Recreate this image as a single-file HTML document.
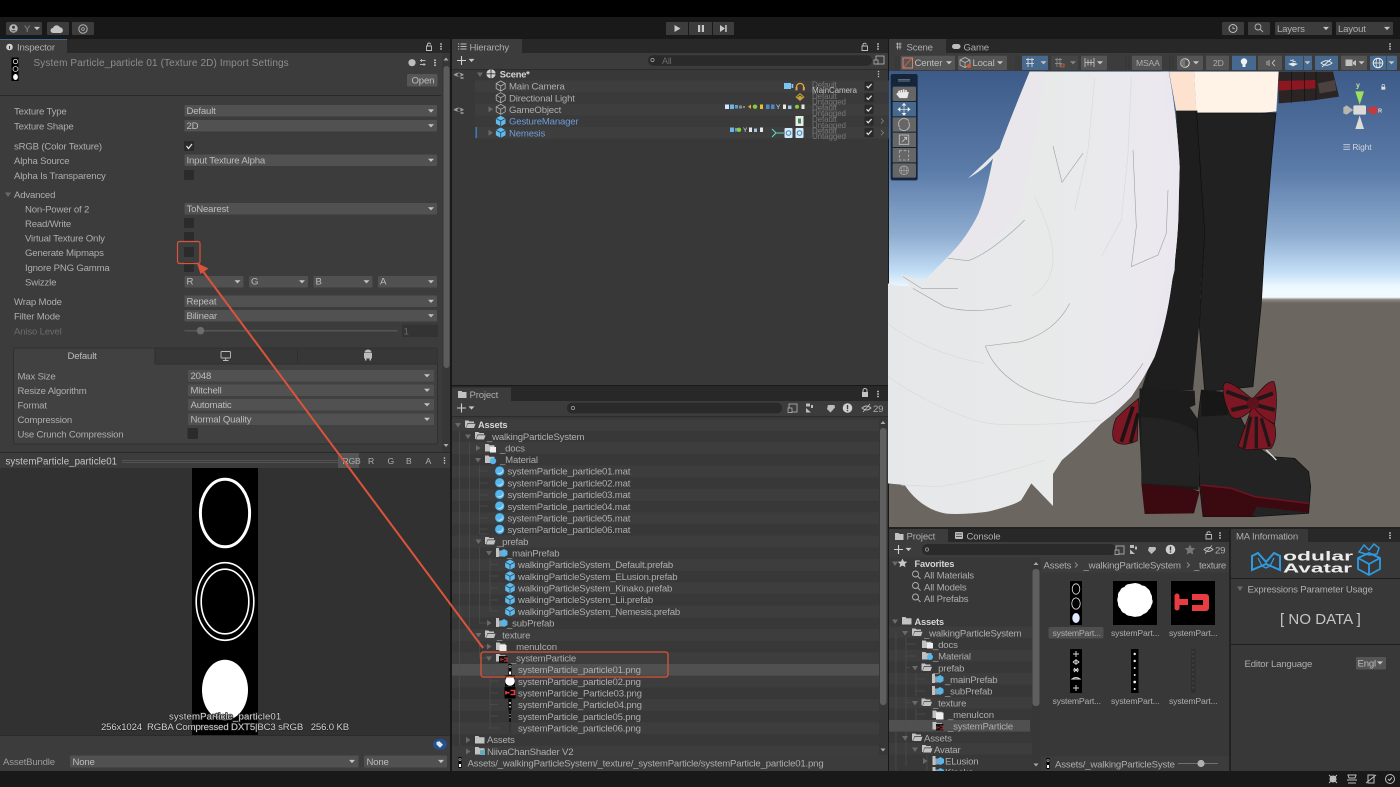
<!DOCTYPE html>
<html><head><meta charset="utf-8"><title>Unity Editor</title>
<style>
html,body{margin:0;padding:0;background:#000;width:1400px;height:787px;overflow:hidden}
svg{display:block;filter:blur(.3px)}
text{font-family:"Liberation Sans",sans-serif;font-size:9.6px;fill:#aeaeae;letter-spacing:-.18px;white-space:pre}
.d{fill:#bdbdbd}
.dim{fill:#6b6b6b}
.b{fill:#6f9bd6}
.s{font-size:8px;fill:#777;letter-spacing:-.1px}
.w{fill:#d6d6d6}
.bar{fill:#515151}
.box{fill:#2b2b2b}
.ic{fill:#c4c4c4}
</style></head><body>
<svg width="1400" height="787" viewBox="0 0 1400 787" xmlns="http://www.w3.org/2000/svg">
<defs>
<path id="da" d="M-3-1.6h6L0 1.6z" fill="#c4c4c4"/>
<path id="ta" d="M-3-2h6L0 2.5z" fill="#6a6a6a"/>
<path id="ra" d="M-2-3 2.5 0-2 3z" fill="#6a6a6a"/>
<path id="fo" d="M0 1h3.5l1 1H9v1.5H2.5L1 8H0zM2.8 4.2H10.5L9 8.5H1.2z" fill="#c2c2c2"/>
<path id="fc" d="M0 1h3.5l1 1.2H9.5v6.3H0z" fill="#c2c2c2"/>
<g id="fcube"><path d="M0 0h3v9H0z" fill="#c2c2c2"/><path d="M3 2.5h3.5v6H3z" fill="#9a9a9a"/><path d="M8-1 11.5 1V5L8 7 4.5 5V1z" transform="translate(0 2)" fill="#5ab4e6"/></g>
<g id="cb"><path d="M0-5.2 4.8-2.6V2.6L0 5.2-4.8 2.6V-2.6z" fill="#5fbbeb"/><path d="M-4.8-2.6 0 0 4.8-2.6M0 0V5.2" stroke="#2b4252" fill="none" stroke-width=".8"/></g>
<g id="cg"><path d="M0-5 4.5-2.5V2.5L0 5-4.5 2.5V-2.5zM-4.5-2.5 0 0 4.5-2.5M0 0V5" stroke="#b4b4b4" fill="none" stroke-width=".8"/></g>
<g id="mat"><circle r="4.8" fill="#58b7ea"/><path d="M-3 1.5A3.6 3.6 0 0 0 3.2-2 4 4 0 0 1-3 1.5z" fill="#dff1fb"/><circle r="4.8" fill="none" stroke="#2a4b60" stroke-width=".5"/></g>
<g id="chk"><rect x="-4.6" y="-4.6" width="9.2" height="9.2" rx="1" fill="#2a2a2a"/><path d="M-2.4 0-.8 1.8 2.6-2" stroke="#e4e4e4" stroke-width="1.2" fill="none"/></g>
<g id="mag"><circle cx="-1" cy="-1" r="3" fill="none" stroke="#b0b0b0" stroke-width=".9"/><path d="M1.2 1.2 4 4" stroke="#b0b0b0" stroke-width="1"/></g>
<pattern id="st" width="10" height="23.34" patternUnits="userSpaceOnUse" patternTransform="translate(0 419)"><rect width="10" height="11.67" fill="#3d3d3d"/></pattern>
<pattern id="st2" width="10" height="23.34" patternUnits="userSpaceOnUse" patternTransform="translate(0 80.5)"><rect width="10" height="11.67" fill="#3e3e3e"/></pattern>
<linearGradient id="sky" x1="0" y1="71" x2="0" y2="303" gradientUnits="userSpaceOnUse">
<stop offset="0" stop-color="#3d5b88"/><stop offset=".42" stop-color="#5a7aa8"/><stop offset=".71" stop-color="#8fadd0"/><stop offset=".86" stop-color="#c0dcf5"/><stop offset=".93" stop-color="#ecf8ff"/><stop offset=".975" stop-color="#f4fbff"/><stop offset=".985" stop-color="#8e8a85"/><stop offset="1" stop-color="#6c6660"/></linearGradient>
<linearGradient id="hr" x1="0" y1="0" x2="1" y2="0"><stop offset="0" stop-color="#e6e7e9"/><stop offset=".55" stop-color="#e8eaea"/><stop offset="1" stop-color="#ece8f0"/></linearGradient>
</defs>

<!-- base -->
<rect width="1400" height="787" fill="#191919"/>
<rect width="1400" height="17" fill="#000"/>
<!-- top toolbar -->
<g fill="#3c3c3c">
<rect x="6" y="22" width="36" height="13" rx="1"/><rect x="47" y="22" width="22" height="13" rx="1"/><rect x="72" y="22" width="22" height="13" rx="1"/>
<rect x="666" y="22" width="22" height="13"/><rect x="689" y="22" width="23" height="13"/><rect x="713" y="22" width="21" height="13"/>
<rect x="1222" y="22" width="22" height="13" rx="1"/><rect x="1248" y="22" width="22" height="13" rx="1"/><rect x="1275" y="22" width="57" height="13" rx="1"/><rect x="1336" y="22" width="57" height="13" rx="1"/>
</g>
<circle cx="13.5" cy="28.5" r="4.2" fill="#b8b8b8"/><circle cx="13.5" cy="27.3" r="1.5" fill="#3c3c3c"/><path d="M10.8 31.3a3 2 0 0 1 5.4 0" fill="#3c3c3c"/>
<text x="24" y="32" style="fill:#8d8d8d">Y</text><use href="#da" x="37" y="28.5"/>
<path d="M53 33a2.5 2.5 0 0 1 0-5 3.8 3.8 0 0 1 7-.6 2.9 2.9 0 0 1 1 5.6z" fill="#c4c4c4"/>
<circle cx="83" cy="29" r="4.2" fill="none" stroke="#b4b4b4" stroke-width="1"/><circle cx="83" cy="29" r="1.4" fill="none" stroke="#b4b4b4" stroke-width=".8"/>
<path d="M674.5 25v7l6-3.5z" fill="#c8c8c8"/><path d="M698 25h2.2v7H698zM701.8 25h2.2v7h-2.2z" fill="#c8c8c8"/><path d="M720 25v7l5-3.5zM725.2 25h1.5v7h-1.5z" fill="#c8c8c8"/>
<circle cx="1233" cy="28.5" r="4" fill="none" stroke="#c0c0c0"/><path d="M1233 26.5v2.2h1.8" stroke="#c0c0c0" fill="none" stroke-width=".8"/>
<use href="#mag" x="1259" y="28"/>
<text x="1277" y="32">Layers</text><use href="#da" x="1326" y="28.5"/>
<text x="1338" y="32">Layout</text><use href="#da" x="1387" y="28.5"/>

<!-- INSPECTOR -->
<rect x="0" y="39" width="450" height="14" fill="#282828"/>
<rect x="0" y="39" width="67" height="14" fill="#3c3c3c"/><rect x="0" y="39" width="67" height="1" fill="#3a6a93"/>
<circle cx="9.5" cy="47" r="3.3" fill="#d0d0d0"/><rect x="9" y="46" width="1" height="3" fill="#333"/>
<text x="17" y="50.5">Inspector</text>
<path d="M426.5 46h5v4.5h-5zM427.5 46v-1.5a1.5 1.5 0 0 1 3 0" fill="none" stroke="#c0c0c0" stroke-width=".9"/>
<circle cx="441" cy="44" r=".9" fill="#ccc"/><circle cx="441" cy="46.5" r=".9" fill="#ccc"/><circle cx="441" cy="49" r=".9" fill="#ccc"/>
<rect x="0" y="53" width="450" height="418" fill="#3c3c3c"/>
<rect x="0" y="95" width="441" height="1" fill="#2a2a2a"/>
<rect x="11.5" y="57.5" width="7" height="23.5" fill="#000"/><circle cx="15.5" cy="61.5" r="2.2" fill="none" stroke="#ddd" stroke-width=".8"/><circle cx="15.5" cy="69" r="2.5" fill="none" stroke="#ddd" stroke-width=".8"/><ellipse cx="15.5" cy="77" rx="2.4" ry="3" fill="#fff"/>
<text x="33.5" y="66" textLength="255" style="fill:#8e8e8e;font-size:10px">System Particle_particle 01 (Texture 2D) Import Settings</text>
<circle cx="412" cy="62.7" r="3.6" fill="#bdbdbd"/><path d="M420 60.5h5.5M420 64.5h5.5M421.5 59v3M424 63v3" stroke="#bbb" stroke-width=".9"/>
<circle cx="435" cy="60.2" r=".9" fill="#ccc"/><circle cx="435" cy="62.7" r=".9" fill="#ccc"/><circle cx="435" cy="65.2" r=".9" fill="#ccc"/>
<rect x="407" y="74" width="30.5" height="12.5" rx="1.5" fill="#565656"/><text x="411.5" y="83.5" class="d">Open</text>
<!-- inspector scrollbar -->
<rect x="442" y="53" width="8" height="399" fill="#373737"/><rect x="443.5" y="66" width="6" height="302" rx="3" fill="#5c5c5c"/><path d="M443.5 60.5h5l-2.5-3z" fill="#aaa"/><path d="M443.5 444h5l-2.5 3z" fill="#aaa"/>

<rect x="0" y="735" width="450" height="36" fill="#3c3c3c"/><rect x="0" y="735" width="450" height="1" fill="#2b2b2b"/>
<rect x="13.5" y="348" width="424" height="96" rx="2" fill="#414141" stroke="#2f2f2f"/>
<rect x="155" y="348.5" width="282.5" height="15" fill="#373737"/>
<path d="M155 348v16M297.5 348v16M155 364h283" stroke="#2f2f2f"/>

<g>
<text x="14" y="114.5">Texture Type</text>
<text x="14" y="129.5">Texture Shape</text>
<text x="14" y="149.5">sRGB (Color Texture)</text>
<text x="14" y="164">Alpha Source</text>
<text x="14" y="179">Alpha Is Transparency</text>
<use href="#ta" x="8" y="194.5"/>
<text x="14" y="198">Advanced</text>
<text x="25" y="212.5">Non-Power of 2</text>
<text x="25" y="227">Read/Write</text>
<text x="25" y="241.5">Virtual Texture Only</text>
<text x="25" y="256">Generate Mipmaps</text>
<text x="25" y="271">Ignore PNG Gamma</text>
<text x="25" y="285.5">Swizzle</text>
<text x="14" y="305">Wrap Mode</text>
<text x="14" y="319.5">Filter Mode</text>
<text x="14" y="334.5" class="dim">Aniso Level</text>
</g>
<g class="bar">
<rect x="184.5" y="105" width="252.5" height="11.5" rx="1"/><rect x="184.5" y="120" width="252.5" height="11.5" rx="1"/>
<rect x="184.5" y="154.5" width="252.5" height="11.5" rx="1"/><rect x="184.5" y="203" width="252.5" height="11.5" rx="1"/>
<rect x="184.5" y="276" width="59" height="11.5" rx="1"/><rect x="249" y="276" width="59" height="11.5" rx="1"/><rect x="313.5" y="276" width="59" height="11.5" rx="1"/><rect x="378" y="276" width="59" height="11.5" rx="1"/>
<rect x="184.5" y="295.5" width="252.5" height="11.5" rx="1"/><rect x="184.5" y="310" width="252.5" height="11.5" rx="1"/>
<rect x="188" y="370" width="246" height="11.5" rx="1"/><rect x="188" y="384.5" width="246" height="11.5" rx="1"/><rect x="188" y="399" width="246" height="11.5" rx="1"/><rect x="188" y="413.5" width="246" height="11.5" rx="1"/>
<rect x="70" y="755.5" width="288.5" height="12" rx="1"/><rect x="364" y="755.5" width="83" height="12" rx="1"/>
</g>
<g>
<text x="186.5" y="114" class="d">Default</text><text x="186.5" y="129" class="d">2D</text><text x="186.5" y="163.5" class="d">Input Texture Alpha</text><text x="186.5" y="212" class="d">ToNearest</text>
<text x="186.5" y="284.5" class="d">R</text><text x="251" y="284.5" class="d">G</text><text x="315.5" y="284.5" class="d">B</text><text x="380" y="284.5" class="d">A</text>
<text x="186.5" y="304.5" class="d">Repeat</text><text x="186.5" y="319" class="d">Bilinear</text>
<text x="190.5" y="379" class="d">2048</text><text x="190.5" y="393.5" class="d">Mitchell</text><text x="190.5" y="408" class="d">Automatic</text><text x="190.5" y="422.5" class="d">Normal Quality</text>
<text x="72.5" y="765" class="d">None</text><text x="366.5" y="765" class="d">None</text>
</g>
<use href="#da" x="431" y="111"/><use href="#da" x="431" y="125.8"/><use href="#da" x="431" y="160.3"/><use href="#da" x="431" y="208.8"/>
<use href="#da" x="237.5" y="281.8"/><use href="#da" x="302" y="281.8"/><use href="#da" x="366.5" y="281.8"/><use href="#da" x="431" y="281.8"/>
<use href="#da" x="431" y="301.3"/><use href="#da" x="431" y="315.8"/>
<use href="#da" x="427" y="375.8"/><use href="#da" x="427" y="390.3"/><use href="#da" x="427" y="404.8"/><use href="#da" x="427" y="419.3"/>
<use href="#da" x="352" y="761.5"/><use href="#da" x="441" y="761.5"/>
<g class="box">
<rect x="184" y="141" width="10" height="10" rx="1"/><rect x="184" y="170" width="10" height="10" rx="1"/><rect x="184" y="218" width="10" height="10" rx="1"/><rect x="184" y="232" width="10" height="10" rx="1"/><rect x="184" y="247" width="10" height="10" rx="1"/><rect x="184" y="262" width="10" height="10" rx="1"/><rect x="187.5" y="428" width="10.5" height="11" rx="1.5"/>
</g>
<path d="M186.5 146 188.5 148.5 192 144" stroke="#e6e6e6" stroke-width="1.2" fill="none"/>
<rect x="184.5" y="330" width="213" height="1.5" fill="#555"/><circle cx="200.5" cy="330.7" r="3.8" fill="#6c6c6c"/>
<rect x="402" y="324.5" width="36" height="12.5" rx="1" fill="#333"/><text x="403.5" y="334.5" class="dim">1</text>
<text x="67.5" y="359" class="d">Default</text>
<rect x="221" y="351.5" width="9.5" height="6.5" rx="1" fill="none" stroke="#bdbdbd" stroke-width=".9"/><path d="M225.7 358v2M223 360.5h5.5" stroke="#bdbdbd" stroke-width=".9"/>
<path d="M364 353h8v5.5h-1v2h-1.5v-2h-3v2H365v-2h-1zM364.5 352.5a3.5 3 0 0 1 7 0z" fill="#bcbcbc"/>
<text x="17.5" y="379.5">Max Size</text><text x="17.5" y="394">Resize Algorithm</text><text x="17.5" y="408.5">Format</text><text x="17.5" y="423">Compression</text><text x="17.5" y="437.5">Use Crunch Compression</text>
<!-- preview header -->
<rect x="0" y="452" width="450" height="1" fill="#2a2a2a"/>
<rect x="0" y="453" width="450" height="15" fill="#3c3c3c"/>
<text x="5.5" y="464.5" style="font-size:9.7px;fill:#c6c6c6;letter-spacing:.05px">systemParticle_particle01</text>
<path d="M122 460.5h216M122 462.5h216" stroke="#5a5a5a" stroke-width=".8"/>
<rect x="338" y="453" width="21" height="15" fill="#555"/>
<text x="342.5" y="464" style="font-size:8.6px">RGB</text><text x="368" y="464" style="font-size:8.6px">R</text><text x="387.5" y="464" style="font-size:8.6px">G</text><text x="406" y="464" style="font-size:8.6px">B</text><text x="425.5" y="464" style="font-size:8.6px">A</text>
<circle cx="444.5" cy="458" r=".8" fill="#ccc"/><circle cx="444.5" cy="460.5" r=".8" fill="#ccc"/><circle cx="444.5" cy="463" r=".8" fill="#ccc"/>
<!-- preview -->
<rect x="0" y="468" width="450" height="267" fill="#313131"/>
<rect x="192" y="468" width="66" height="267" fill="#000"/>
<ellipse cx="225" cy="513" rx="24.6" ry="33.8" fill="none" stroke="#fff" stroke-width="3"/>
<ellipse cx="225" cy="601.5" rx="28.8" ry="38.8" fill="none" stroke="#fff" stroke-width="1.6"/>
<ellipse cx="225" cy="601.5" rx="23.8" ry="32.3" fill="none" stroke="#fff" stroke-width="1.6"/>
<ellipse cx="225" cy="690" rx="23" ry="30.3" fill="#fff"/>
<text x="225" y="719.5" text-anchor="middle" textLength="112" style="fill:#d2d2d2;paint-order:stroke;stroke:#222;stroke-width:1.5px">systemParticle_particle01</text>
<text x="225" y="730" text-anchor="middle" textLength="248" style="fill:#d2d2d2;paint-order:stroke;stroke:#222;stroke-width:1.2px">256x1024  RGBA Compressed DXT5|BC3 sRGB   256.0 KB</text>
<ellipse cx="440" cy="744.3" rx="7" ry="5.5" fill="#24508c"/><path d="M436.5 742v2.5l3.5 3.2 3-3-3.5-3.4z" fill="#e0e6ee"/>
<text x="3" y="765" style="fill:#9c9c9c">AssetBundle</text>

<!-- HIERARCHY -->
<rect x="452" y="39" width="436" height="346" fill="#383838"/>
<rect x="452" y="39" width="436" height="14" fill="#282828"/>
<rect x="452" y="39" width="70" height="14" rx="1" fill="#3c3c3c"/>
<path d="M458 44h1.2M458 46.5h1.2M458 49h1.2M460.5 44h6M460.5 46.5h6M460.5 49h6" stroke="#bbb"/>
<text x="469.5" y="50.5">Hierarchy</text>
<path d="M862 46h5.5v4.5H862zM863 46v-1.5a1.7 1.7 0 0 1 3.3 0" fill="none" stroke="#c0c0c0" stroke-width=".9"/>
<circle cx="878" cy="44" r=".9" fill="#ccc"/><circle cx="878" cy="46.5" r=".9" fill="#ccc"/><circle cx="878" cy="49" r=".9" fill="#ccc"/>
<rect x="452" y="53" width="436" height="16" fill="#3c3c3c"/><rect x="452" y="69" width="436" height="1" fill="#2c2c2c"/>
<path d="M457 60.5h9M461.5 56v9" stroke="#d0d0d0" stroke-width="1.1"/><use href="#da" x="471.5" y="60.5"/>
<rect x="648" y="55.3" width="224" height="10.5" rx="5" fill="#2a2a2a"/>
<circle cx="652.5" cy="60" r="1.6" fill="none" stroke="#aaa" stroke-width=".7"/>
<text x="662" y="63.8" class="dim" style="font-size:9px">All</text>
<rect x="876" y="56" width="8" height="8" fill="none" stroke="#bbb" stroke-width=".8"/><path d="M874 60h4v4h-4z" fill="#3c3c3c" stroke="#bbb" stroke-width=".7"/>
<rect x="475" y="80.5" width="414" height="58" fill="#3a3a3a"/><rect x="475" y="80.5" width="414" height="58" fill="url(#st2)"/>
<g><path d="M453.5 74.8q5-4.4 10.5 0-5.2 3.8-10.5 0z" fill="#9a9a9a"/><circle cx="459" cy="74.8" r="1.6" fill="#3a3a3a"/><rect x="460.5" y="77" width="3" height="2" fill="#888"/>
<path d="M453.5 109.8q5-4.4 10.5 0-5.2 3.8-10.5 0z" fill="#9a9a9a"/><circle cx="459" cy="109.8" r="1.6" fill="#3a3a3a"/><rect x="460.5" y="112" width="3" height="2" fill="#888"/></g>
<use href="#ta" x="480" y="74.5"/>
<circle cx="491" cy="73.8" r="4.6" fill="#d0d0d0"/><path d="M491 69v9.6M486.5 73.8h9" stroke="#333" stroke-width=".9"/>
<text x="499.7" y="77.5" class="w" style="font-weight:bold;font-size:9.3px">Scene*</text>
<circle cx="878.5" cy="71.5" r=".8" fill="#bbb"/><circle cx="878.5" cy="74" r=".8" fill="#bbb"/><circle cx="878.5" cy="76.5" r=".8" fill="#bbb"/>
<use href="#cg" x="500.7" y="86"/><use href="#cg" x="500.7" y="97.7"/><use href="#cg" x="500.7" y="109.3"/><use href="#cb" x="500.7" y="121"/><use href="#cb" x="500.7" y="132.7"/>
<use href="#ra" x="490.5" y="109.3"/><use href="#ra" x="490.5" y="132.7"/>
<text x="509" y="89.7">Main Camera</text><text x="509" y="101.3">Directional Light</text><text x="509" y="113">GameObject</text><text x="509" y="124.7" class="b">GestureManager</text><text x="509" y="136.3" class="b">Nemesis</text>
<rect x="475.5" y="127" width="1.5" height="11" fill="#3f7ab8"/>
<rect x="784" y="83" width="7" height="6" fill="#7cc6ef"/><rect x="791.5" y="84" width="1.8" height="4" fill="#7cc6ef"/>
<path d="M796.5 90v-3a3.6 3.6 0 0 1 7.2 0v3" fill="none" stroke="#e8a23a" stroke-width="1.3"/><rect x="795.5" y="87" width="2" height="3.4" fill="#e8a23a"/><rect x="802.8" y="87" width="2" height="3.4" fill="#e8a23a"/>
<path d="M800 93l4.5 4-4.5 4-4.5-4z" fill="#c7a03c"/><path d="M797.5 97l2.5-2 2.5 2" stroke="#333" fill="none" stroke-width=".8"/>
<g>
<rect x="725" y="104.5" width="4" height="4.5" fill="#cfe8ff"/><rect x="730" y="104.5" width="4" height="4.5" fill="#6db4e8"/><rect x="735" y="105" width="3" height="3.5" fill="#5e9ccc"/><rect x="739" y="105.5" width="3" height="3" fill="#888"/><rect x="743" y="106.5" width="2" height="1" fill="#ccc"/><path d="M748 106.7l3-2.2v4.4z" fill="#e0b030"/><circle cx="755" cy="106.7" r="2.2" fill="#8acb3a"/><rect x="760" y="104.5" width="3" height="4.5" fill="#e0c030"/><rect x="766" y="104.5" width="3.5" height="4.5" fill="#4f88c8"/><rect x="771" y="104.5" width="3.5" height="4.5" fill="#4f88c8"/><text x="776" y="109" style="font-size:6.5px;fill:#cfe0f0">Y</text><rect x="783" y="104.5" width="3" height="4.5" fill="#e6e6e6"/><rect x="788" y="105.5" width="3.5" height="3.5" fill="#9fc6e8"/><circle cx="797" cy="106.7" r="2" fill="#8acb3a"/><rect x="801.5" y="104.5" width="3" height="4.5" fill="#e6e6e6"/>
<rect x="730" y="127.5" width="4" height="4.5" fill="#6db4e8"/><rect x="735" y="128" width="3" height="3.5" fill="#5e9ccc"/><circle cx="739" cy="129.8" r="2.2" fill="#8acb3a"/><text x="743" y="132" style="font-size:6.5px;fill:#cfe0f0">Y</text><rect x="749" y="127.5" width="3" height="4.5" fill="#e6e6e6"/><rect x="754" y="128.5" width="3" height="3.5" fill="#9fc6e8"/><rect x="760" y="127.5" width="3" height="4.5" fill="#e6e6e6"/>
<rect x="795.5" y="116" width="8" height="10" fill="#e9ece6"/><rect x="798" y="118.5" width="3" height="5" fill="#3c8a5a"/>
<path d="M772 129l4 4-4 4M776 133h8" stroke="#5fd6c8" stroke-width="1.1" fill="none"/>
<rect x="784.5" y="128" width="8" height="10" rx="1" fill="#d6e9f6"/><circle cx="788.5" cy="133" r="2.3" fill="none" stroke="#3c8ac8" stroke-width="1"/>
<rect x="795.5" y="128" width="8" height="10" rx="1" fill="#d6e9f6"/><circle cx="799.5" cy="133" r="2.3" fill="none" stroke="#3c8ac8" stroke-width="1"/>
</g>
<text x="812" y="87.5" class="s">Default</text><text x="812" y="93" class="s" style="fill:#c2c2c2">MainCamera</text>
<text x="812" y="99" class="s">Default</text><text x="812" y="104.5" class="s">Untagged</text>
<text x="812" y="110.5" class="s">Default</text><text x="812" y="116" class="s">Untagged</text>
<text x="812" y="122" class="s">Default</text><text x="812" y="128" class="s">Untagged</text>
<text x="812" y="133.5" class="s">Default</text><text x="812" y="139" class="s">Untagged</text>
<use href="#chk" x="869" y="86"/><use href="#chk" x="869" y="97.7"/><use href="#chk" x="869" y="109.3"/><use href="#chk" x="869" y="121"/><use href="#chk" x="869" y="132.7"/>
<path d="M881 118.5l2.5 2.5-2.5 2.5M881 130.2l2.5 2.5-2.5 2.5" stroke="#777" fill="none" stroke-width="1"/>

<!-- PROJECT LEFT -->
<rect x="452" y="386" width="436" height="385" fill="#383838"/>
<rect x="452" y="386" width="436" height="15" fill="#282828"/>
<rect x="452" y="387.5" width="59" height="14" fill="#3c3c3c"/>
<path d="M458 391h3.5l1 1h4v6H458z" fill="#c2c2c2"/>
<text x="469.5" y="398">Project</text>
<rect x="862" y="392" width="6" height="5" fill="#c4c4c4"/><path d="M863 392v-1.5a2 2 0 0 1 4 0V392" fill="none" stroke="#c4c4c4"/>
<circle cx="878" cy="391.5" r=".9" fill="#ccc"/><circle cx="878" cy="394" r=".9" fill="#ccc"/><circle cx="878" cy="396.5" r=".9" fill="#ccc"/>
<rect x="452" y="401" width="436" height="15.5" fill="#3c3c3c"/><rect x="452" y="416" width="436" height="1" fill="#2c2c2c"/>
<path d="M457 408h9M461.5 403.5v9" stroke="#d0d0d0" stroke-width="1.1"/><use href="#da" x="471.5" y="408"/>
<rect x="567" y="402.7" width="215" height="10.7" rx="5" fill="#2a2a2a"/><circle cx="573" cy="408" r="1.6" fill="none" stroke="#aaa" stroke-width=".7"/>
<rect x="789" y="404" width="8" height="8" fill="none" stroke="#bbb" stroke-width=".8"/><path d="M788 408h4v4.5h-4z" fill="#3c3c3c" stroke="#bbb" stroke-width=".7"/>
<path d="M806 403.5h4v3h-4zM811 405h2v3h-2zM806 408l5 4.5h-5z" fill="#bcbcbc"/>
<path d="M828 405h6.500l.5 2.500-4.500 5-3.500-3.500z" fill="#bcbcbc"/>
<circle cx="847.5" cy="408" r="4.8" fill="#d0d0d0"/><rect x="846.8" y="405" width="1.4" height="4" fill="#3c3c3c"/><rect x="846.8" y="409.8" width="1.4" height="1.4" fill="#3c3c3c"/>
<path d="M862 408q4.5-4 9 0-4.5 4-9 0zM863 412l7-8" fill="none" stroke="#bbb" stroke-width=".9"/><text x="873" y="411.8">29</text>
<rect x="452" y="419" width="427" height="336" fill="url(#st)"/>
<rect x="452" y="664" width="427" height="11.6" fill="#505050"/>
<path d="M459.5 431V745M469.5 442V630M479.5 465V534h8M479.5 471h8M479.5 483h8M479.5 495h8M479.5 506h8M479.5 518h8M479.5 529h8M479.5 547V623h8M479.5 640V658h8M479.5 646h8M490 558V611h8M490 564.5h8M490 576h8M490 588h8M490 600h8M490 664V728h8M490 669.5h8M490 681h8M490 693h8M490 704.5h8M490 716h8" stroke="#4e4e4e" fill="none" stroke-width=".7"/>
<rect x="879" y="417" width="9" height="338" fill="#373737"/><rect x="880" y="428" width="6.5" height="277" rx="3" fill="#5f5f5f"/><path d="M880.5 424h5l-2.5-3z" fill="#aaa"/><path d="M880.5 748.5h5l-2.5 3z" fill="#aaa"/>
<use href="#ta" x="458" y="425"/><use href="#fo" x="465" y="419.5"/><text x="478" y="428" class="w" style="font-weight:bold;font-size:9.3px">Assets</text>
<use href="#ta" x="468" y="436.5"/><use href="#fo" x="475" y="431"/><text x="487" y="439.8">_walkingParticleSystem</text>
<use href="#ra" x="478" y="448"/><use href="#fc" x="485" y="443"/><rect x="490" y="447" width="6" height="5.5" fill="#eee"/><text x="500" y="451.5">_docs</text>
<use href="#ta" x="478" y="460"/><use href="#fc" x="485" y="454.5"/><circle cx="493" cy="461" r="3.2" fill="#58b7ea"/><text x="500" y="463">_Material</text>
<use href="#mat" x="499.7" y="471"/><text x="507.5" y="474.7">systemParticle_particle01.mat</text>
<use href="#mat" x="499.7" y="482.7"/><text x="507.5" y="486.4">systemParticle_particle02.mat</text>
<use href="#mat" x="499.7" y="494.4"/><text x="507.5" y="498.1">systemParticle_particle03.mat</text>
<use href="#mat" x="499.7" y="506"/><text x="507.5" y="509.8">systemParticle_particle04.mat</text>
<use href="#mat" x="499.7" y="517.7"/><text x="507.5" y="521.4">systemParticle_particle05.mat</text>
<use href="#mat" x="499.7" y="529.4"/><text x="507.5" y="533.1">systemParticle_particle06.mat</text>
<use href="#ta" x="478.5" y="541.5"/><use href="#fo" x="485" y="536"/><text x="497" y="544.8">_prefab</text>
<use href="#ta" x="489" y="553"/><use href="#fcube" x="496" y="548"/><text x="507" y="556.4">_mainPrefab</text>
<use href="#cb" x="510" y="564.7"/><text x="518" y="568.1">walkingParticleSystem_Default.prefab</text>
<use href="#cb" x="510" y="576.3"/><text x="518" y="579.8">walkingParticleSystem_ELusion.prefab</text>
<use href="#cb" x="510" y="588"/><text x="518" y="591.5">walkingParticleSystem_Kinako.prefab</text>
<use href="#cb" x="510" y="599.7"/><text x="518" y="603.2">walkingParticleSystem_Lii.prefab</text>
<use href="#cb" x="510" y="611.3"/><text x="518" y="614.9">walkingParticleSystem_Nemesis.prefab</text>
<use href="#ra" x="489" y="623"/><use href="#fcube" x="496" y="618"/><text x="507" y="626.6">_subPrefab</text>
<use href="#ta" x="478.5" y="635"/><use href="#fo" x="485" y="629.5"/><text x="497" y="638.3">_texture</text>
<use href="#ra" x="489" y="646.5"/><use href="#fc" x="496" y="641.5"/><rect x="499.5" y="645" width="7" height="6" fill="#eee"/><text x="511" y="650">_menuIcon</text>
<use href="#ta" x="489" y="658.5"/><use href="#fc" x="496" y="653"/><rect x="499" y="656" width="8.5" height="7" fill="#111"/><path d="M501 658v3M502 659.5h1.5M504 658h3v3h-3" stroke="#e03c3c" stroke-width="1" fill="none"/><text x="511" y="661.5">_systemParticle</text>
<rect x="508.5" y="664" width="3" height="11.5" fill="#000"/><circle cx="510" cy="666.5" r="1" fill="none" stroke="#ddd" stroke-width=".6"/><rect x="509" y="671.5" width="2" height="3" fill="#fff"/>
<text x="518" y="673.2">systemParticle_particle01.png</text>
<rect x="505" y="675.5" width="10" height="11" fill="#000"/><circle cx="510" cy="681" r="4.8" fill="#fff"/><text x="518" y="684.9">systemParticle_particle02.png</text>
<rect x="504.5" y="687" width="11" height="11.5" fill="#000"/><path d="M506 691v3.5M506.5 692.7h3M510.5 690.5h4v4h-4" stroke="#e23c3c" stroke-width="1.6" fill="none"/><text x="518" y="696.6">systemParticle_Particle03.png</text>
<rect x="508.5" y="699" width="3" height="11.5" fill="#000"/><rect x="509.3" y="702" width="1.5" height="2" fill="#ddd"/><rect x="509.3" y="706" width="1.5" height="1.5" fill="#ddd"/><text x="518" y="708.2">systemParticle_Particle04.png</text>
<rect x="509.3" y="711" width="1.5" height="11" fill="#000"/><rect x="509.6" y="714" width=".9" height="1" fill="#ddd"/><rect x="509.6" y="717" width=".9" height="1" fill="#ddd"/><text x="518" y="719.9">systemParticle_particle05.png</text>
<rect x="509.6" y="723" width=".8" height="10" fill="#2a2a2a"/><text x="518" y="731.6">systemParticle_particle06.png</text>
<use href="#ra" x="468" y="740"/><use href="#fc" x="475" y="735"/><text x="487" y="743.2">Assets</text>
<use href="#ra" x="468" y="751.5"/><use href="#fc" x="475" y="746"/><rect x="480" y="750" width="5" height="5" fill="#6ab"/><text x="487" y="754.9">NiiyaChanShader V2</text>
<rect x="452" y="755" width="436" height="16" fill="#3c3c3c"/>
<rect x="458.5" y="757" width="3" height="11" fill="#000"/><circle cx="460" cy="759.5" r="1" fill="none" stroke="#ddd" stroke-width=".6"/><rect x="459" y="764" width="2" height="3" fill="#fff"/>
<text x="467.5" y="766.3">Assets/_walkingParticleSystem/_texture/_systemParticle/systemParticle_particle01.png</text>

<!-- SCENE -->
<rect x="889" y="39" width="511" height="14" fill="#282828"/>
<rect x="889" y="39" width="57" height="14" fill="#3c3c3c"/>
<path d="M896 44h5.5M896 47h5.5M897.5 42.5v7M900 42.5v7" stroke="#bbb" stroke-width=".8"/>
<text x="906.5" y="50.5">Scene</text>
<rect x="952" y="44" width="8.5" height="5" rx="2.5" fill="#bdbdbd"/><text x="963.5" y="50.5">Game</text>
<circle cx="1390" cy="44" r=".9" fill="#ccc"/><circle cx="1390" cy="46.5" r=".9" fill="#ccc"/><circle cx="1390" cy="49" r=".9" fill="#ccc"/>
<rect x="889" y="53" width="511" height="18" fill="#3c3c3c"/>
<g fill="#555">
<rect x="900.7" y="55.7" width="54.3" height="14.3" rx="1"/><rect x="958" y="55.7" width="49" height="14.3" rx="1"/>
<rect x="1051" y="55.7" width="27" height="14.3" rx="1" fill="#454545"/><rect x="1081" y="55.7" width="26" height="14.3" rx="1"/><rect x="1132" y="55.7" width="30" height="14.3" rx="1"/>
<rect x="1177" y="55.7" width="26" height="14.3" rx="1"/><rect x="1206" y="55.7" width="23" height="14.3" rx="1"/><rect x="1258" y="55.7" width="24" height="14.3" rx="1"/><rect x="1341" y="55.7" width="26" height="14.3" rx="1"/>
</g>
<g fill="#46698d">
<rect x="1022" y="55.7" width="26" height="14.3" rx="1"/><rect x="1232" y="55.7" width="24" height="14.3" rx="1"/><rect x="1285" y="55.7" width="27" height="14.3" rx="1"/><rect x="1315" y="55.7" width="23" height="14.3" rx="1"/><rect x="1370" y="55.7" width="27" height="14.3" rx="1"/>
</g>
<path d="M896 56v14M899 56v14M1016 56v14M1019 56v14M1126 56v14M1129 56v14M1170 56v14M1173 56v14" stroke="#2f2f2f" stroke-width=".8" opacity=".7"/>
<rect x="903" y="58" width="9.5" height="10" fill="none" stroke="#e08a70" stroke-width=".9"/><path d="M904 67l7.5-8.5" stroke="#d4583c"/>
<text x="914.5" y="66" class="d">Center</text><use href="#da" x="949" y="62.8"/>
<path d="M965 57.5 970 60v5l-5 2.5-5-2.5v-5zM960 60l5 2.5 5-2.5M965 62.5v5" fill="none" stroke="#bbb" stroke-width=".8"/><circle cx="969" cy="66" r="2" fill="#d4583c"/>
<text x="972.5" y="66" class="d">Local</text><use href="#da" x="1000" y="62.8"/>
<path d="M1026 59.5h8M1026 63.5h8M1028 58v9M1032 58v9" stroke="#e6e6e6" stroke-width=".8"/><use href="#da" x="1043.5" y="62.8"/>
<path d="M1055 59.5h7M1055 63.5h7M1057 58v9M1060 58v9" stroke="#999" stroke-width=".7"/><path d="M1061 64h3v3h-3z" fill="none" stroke="#c8683c" stroke-width=".8"/><use href="#da" x="1073" y="62.8" opacity=".5"/>
<path d="M1085 58v9M1094 58v9M1085 62.5h9M1088 59.5v6M1091 59.5v6" stroke="#ccc" stroke-width=".8"/><use href="#da" x="1100" y="62.8"/>
<text x="1136" y="66" style="font-size:8.6px">MSAA</text>
<circle cx="1185" cy="63" r="4.3" fill="none" stroke="#ddd"/><path d="M1185 58.7a4.3 4.3 0 0 0 0 8.6z" fill="#777"/><use href="#da" x="1196" y="62.8"/>
<text x="1213" y="66" style="font-size:8.6px">2D</text>
<circle cx="1244" cy="61.5" r="3.2" fill="#f2f2f2"/><rect x="1242.5" y="64.5" width="3" height="2.5" fill="#f2f2f2"/>
<path d="M1267 61v4M1269 60v6M1272 63l3 3M1275 60l-3 3" stroke="#bbb" stroke-width=".9"/>
<path d="M1289 64l4-1 4 1-4 2zM1293 62v-3M1290 60l6 2" stroke="#e8e8e8" fill="#e8e8e8" stroke-width=".7"/><rect x="1303" y="55.7" width=".7" height="14.3" fill="#3c3c3c"/><use href="#da" x="1307.5" y="62.8"/>
<path d="M1321 63q5.5-4.5 11 0-5.5 4.5-11 0zM1322 67l9-8" fill="none" stroke="#e8e8e8" stroke-width=".9"/>
<rect x="1345.5" y="59.5" width="7" height="6.5" fill="#c0c0c0"/><path d="M1353 62l3-2v6l-3-2z" fill="#c0c0c0"/><use href="#da" x="1361.5" y="62.8"/>
<circle cx="1378" cy="63" r="4.8" fill="none" stroke="#f0f0f0"/><ellipse cx="1378" cy="63" rx="2" ry="4.8" fill="none" stroke="#f0f0f0" stroke-width=".7"/><path d="M1373 63h10" stroke="#f0f0f0" stroke-width=".8"/><rect x="1386" y="55.7" width=".7" height="14.3" fill="#3c3c3c"/><use href="#da" x="1391.5" y="62.8"/>
<!-- Scene view -->
<rect x="889" y="71" width="511" height="456" fill="#6c6660"/>
<rect x="889" y="71" width="511" height="232" fill="url(#sky)"/>
<g transform="translate(888 70) scale(.33333)">
 <path d="M1170 5H1335L1353 80 1270 92 1172 100z" fill="#2a2425"/>
 <path d="M1172 33 1282 30 1284 55 1172 62z" fill="#8d1720"/><path d="M1290 40 1340 30 1345 62 1295 70z" fill="#4b4240"/>
 <path d="M1210 5V98M1250 5V94M1284 5V90" stroke="#111" stroke-width="2"/>
 <path d="M843 5H918L925 125H865z" fill="#fde2cf"/>
 <path d="M918 5H1172L1165 124 1110 130H925z" fill="#fff2e7"/>
 <path d="M864 122H928L950 490 933 770 915 960 760 960 810 800 860 600 872 300z" fill="#1e1e1f"/>
 <path d="M926 129H1164L1150 280 1128 560 1120 700 1095 950 950 965 934 770 950 490z" fill="#212122" stroke="#0e0e0e" stroke-width="2"/>
 <path d="M752 985C720 1010 695 1035 684 1045 672 1075 672 1095 677 1110 690 1125 715 1128 748 1112z" fill="#7d1724" stroke="#111" stroke-width="2"/>
 <path d="M735 1010 700 1115M750 1030 728 1118" stroke="#1c1414" stroke-width="11"/>
 <path d="M755 955 920 962 922 1005 905 1012 928 1045 932 1260 762 1245 752 1040z" fill="#1c1c1c"/>
 <path d="M760 1040C830 1045 900 1060 925 1090L935 1250 760 1240z" fill="#232323"/>
 <path d="M760 1240C820 1250 890 1245 935 1265L918 1330 770 1332z" fill="#3b0910"/>
 <path d="M940 960 1020 970 1100 1125 1150 1160 1220 1165 1262 1205 1268 1250 1262 1330 1095 1340 945 1340 935 1250 928 1060z" fill="#232323" stroke="#0c0c0c" stroke-width="2"/>
 <path d="M940 960 1020 966 1020 1035 940 1040z" fill="#171717"/>
 <path d="M938 1245 1030 1255 1100 1280 1262 1300 1262 1328 1105 1310 1092 1340 945 1340z" fill="#3b0910"/>
 <path d="M938 1245 1030 1255 1100 1280 1262 1300" fill="none" stroke="#6a1420" stroke-width="5"/>
 <path d="M1105 1100 1120 1120M1135 1140 1165 1170" stroke="#ddd" stroke-width="4"/>
 <path d="M1090 1015C1075 1060 1060 1100 1050 1130L1075 1140 1150 1135C1165 1110 1165 1090 1160 1065 1140 1050 1115 1035 1100 1015z" fill="#7d1724" stroke="#111" stroke-width="2"/>
 <path d="M1088 1040 1068 1135M1105 1040 1105 1135M1120 1045 1145 1130" stroke="#221618" stroke-width="10"/>
 <path d="M1090 985C1060 960 1030 935 1012 938 1000 945 1005 985 1020 1020 1030 1050 1050 1058 1090 1020z" fill="#7d1724" stroke="#111" stroke-width="2"/>
 <path d="M1095 985C1120 960 1140 930 1158 935 1170 970 1165 1020 1160 1062 1135 1050 1115 1035 1100 1015z" fill="#7d1724" stroke="#111" stroke-width="2"/>
 <path d="M1015 965 1085 990M1030 1020 1085 1008M1155 970 1100 990M1160 1020 1105 1005" stroke="#221618" stroke-width="12"/>
 <circle cx="1095" cy="1000" r="18" fill="#5e121c"/>
 <!-- hair -->
 <path d="M425 5C390 90 350 190 335 235L240 325C275 305 300 285 315 265 300 340 285 410 262 450 235 500 205 535 180 560 150 590 130 610 105 635L38 612 65 648Q30 650 0 640V1240L50 1245C80 1290 120 1320 170 1330 210 1335 260 1330 300 1325 340 1315 390 1300 400 1290L430 1240 495 1308 495 1212 522 1170C570 1130 610 1090 640 1060 680 1030 710 1000 730 980 770 920 790 880 800 860 825 790 840 720 850 650 865 550 872 470 872 400L875 290C870 200 860 100 842 5z" fill="url(#hr)"/>
 <path d="M842 5C860 100 870 200 875 290L872 400C872 470 865 550 850 650 840 720 825 790 800 860 790 880 770 920 730 980 710 1000 680 1030 640 1060L610 1085C680 1010 760 900 790 810 830 660 852 500 852 380 850 240 835 100 820 5z" fill="#ebe7ee"/>
 <path d="M425 5C390 90 350 190 335 235 300 340 285 410 262 450 235 500 205 535 180 560L235 562C300 530 360 470 395 420 430 300 455 120 470 5z" fill="#eae7ec"/>
 <g fill="none" stroke="#8d8e8e" stroke-width="1.800" opacity=".8">
  <path d="M495 228 522 337 585 250"/>
  <path d="M735 240 745 470 730 590 810 555 835 490 840 360"/>
  <path d="M180 565 240 572C280 560 350 510 410 450"/>
  <path d="M45 620 100 655 210 655"/>
  <path d="M75 655 170 710C210 722 290 730 370 705"/>
  <path d="M292 828 400 815C450 800 510 770 545 700"/>
  <path d="M292 828C310 880 350 920 400 950 450 980 540 1000 620 1000 670 985 720 950 765 880"/>
 </g>
 <g fill="none" stroke="#d8dbd9" stroke-width="2">
  <path d="M0 760C60 810 170 860 290 880"/>
  <path d="M0 920C70 970 200 1040 300 1060 380 1070 550 1060 640 1050"/>
  <path d="M40 1245 150 1250C230 1240 380 1200 470 1170"/>
  <path d="M620 25 600 240 560 420M730 20 720 250 700 450 640 560"/>
  <path d="M440 380C500 500 530 620 430 680"/>
 </g>
 <!-- toolbar overlay -->
 <rect x="8" y="12" width="81" height="319" rx="6" fill="#15263c"/>
 <path d="M30 29h36M30 33h36" stroke="#8a9099" stroke-width="2"/>
 <g fill="#666">
  <rect x="14" y="50" width="70" height="43" rx="4"/><rect x="14" y="96" width="70" height="43" fill="#46698d"/><rect x="14" y="142" width="70" height="43"/><rect x="14" y="188" width="70" height="43"/><rect x="14" y="234" width="70" height="43"/><rect x="14" y="280" width="70" height="43" rx="4"/>
 </g>
 <path d="M36 82 33 62M40 60V80M47 58V80M54 60V80M60 66 56 82H36L28 72 32 68" fill="#eee" stroke="#e8e8e8" stroke-width="5"/>
 <path d="M30 118H66M48 100V136M30 118l6-5v10zM66 118l-6-5v10zM48 100l-5 6h10zM48 136l-5-6h10z" fill="#eee" stroke="#eee" stroke-width="2"/>
 <path d="M62 152A16 16 0 0 0 35 172M34 175A16 16 0 0 0 61 155" fill="none" stroke="#b4b4b4" stroke-width="3"/>
 <path d="M34 195H62V223H34z" fill="none" stroke="#b4b4b4" stroke-width="3"/><path d="M42 216 56 202M48 202H56V210" fill="none" stroke="#ccc" stroke-width="2.5"/>
 <path d="M34 242H62V270H34z" fill="none" stroke="#b4b4b4" stroke-width="2.5" stroke-dasharray="8 5"/>
 <circle cx="48" cy="301" r="13" fill="none" stroke="#b4b4b4" stroke-width="2"/><path d="M34 301H62M48 287V315M40 290V312M56 290V312" stroke="#b4b4b4" stroke-width="1.5"/>
 <!-- gizmo -->
 <text x="1404" y="53" style="font-size:21px;font-weight:bold;fill:#c7e59e">y</text>
 <rect x="1480" y="50" width="12" height="9" fill="#ddd"/><path d="M1482 50v-3a4 4 0 0 1 8 0v3" fill="none" stroke="#ddd" stroke-width="2"/>
 <path d="M1402 64H1428L1415 104z" fill="#9be25a"/>
 <path d="M1415 136 1402 177H1428z" fill="#dedcd8"/>
 <rect x="1396" y="106" width="38" height="28" rx="4" fill="#dcdad6"/>
 <path d="M1396 120 1376 106 1366 112V130L1376 134z" fill="#b8b6b2"/>
 <path d="M1434 120 1455 108 1468 112V130L1455 134z" fill="#c43b3f"/><text x="1470" y="128" style="font-size:17px;font-weight:bold;fill:#e8d8d8">R</text>
 <path d="M1366 224h20M1366 231h20M1366 238h20" stroke="#cdd4dc" stroke-width="2.5"/>
 <text x="1393" y="240" style="font-size:25px;fill:#d0d6de">Right</text>
</g>
<rect x="889" y="527" width="511" height="2" fill="#222"/>

<!-- PROJECT RIGHT -->
<rect x="889" y="529" width="340" height="242" fill="#383838"/>
<rect x="889" y="529" width="340" height="13" fill="#282828"/>
<rect x="889" y="529" width="59" height="13" fill="#3c3c3c"/>
<path d="M895 533h3.5l1 1h4v6H895z" fill="#c2c2c2"/><text x="906.5" y="539.5">Project</text>
<rect x="955" y="532" width="8" height="7" rx="1" fill="#bdbdbd"/><path d="M956 534h6M956 536.5h6" stroke="#333" stroke-width=".7"/>
<text x="966.5" y="539.5">Console</text>
<path d="M1206 534.5h5.5V539H1206zM1207 534.5V533a1.7 1.7 0 0 1 3.3 0" fill="none" stroke="#c0c0c0" stroke-width=".9"/>
<circle cx="1220" cy="533" r=".9" fill="#ccc"/><circle cx="1220" cy="535.5" r=".9" fill="#ccc"/><circle cx="1220" cy="538" r=".9" fill="#ccc"/>
<rect x="889" y="542" width="340" height="15.5" fill="#3c3c3c"/>
<path d="M894 549.5h9M898.5 545v9" stroke="#d0d0d0" stroke-width="1.1"/><use href="#da" x="908.5" y="549.5"/>
<rect x="922" y="544" width="194" height="11" rx="5" fill="#2a2a2a"/><circle cx="927" cy="549.5" r="1.6" fill="none" stroke="#aaa" stroke-width=".7"/>
<rect x="1116" y="546" width="8" height="8" fill="none" stroke="#bbb" stroke-width=".8"/><path d="M1115 550h4v4.5h-4z" fill="#3c3c3c" stroke="#bbb" stroke-width=".7"/>
<path d="M1130 545h4v3h-4zM1135 546.5h2v3h-2zM1130 549.5l5 4.5h-5z" fill="#bcbcbc"/>
<path d="M1149 547h6.500l.5 2.500-4.500 4.500-3.500-3.500z" fill="#bcbcbc"/>
<circle cx="1170.5" cy="549.5" r="4.8" fill="#d0d0d0"/><rect x="1169.8" y="546.5" width="1.4" height="4" fill="#3c3c3c"/><rect x="1169.8" y="551.3" width="1.4" height="1.4" fill="#3c3c3c"/>
<path d="M1190 544.5l1.6 3.4 3.7.4-2.7 2.5.7 3.7-3.3-1.8-3.3 1.8.7-3.7-2.7-2.5 3.7-.4z" fill="#777"/>
<path d="M1204 549.5q4.5-4 9 0-4.5 4-9 0zM1205 553.5l7-8" fill="none" stroke="#bbb" stroke-width=".9"/><text x="1215" y="553.3">29</text>
<!-- tree -->
<rect x="889" y="557.5" width="143" height="213.5" fill="#383838"/>
<rect x="889" y="626.5" width="143" height="11.6" fill="#3d3d3d"/><rect x="889" y="650" width="143" height="11.6" fill="#3d3d3d"/><rect x="889" y="673" width="143" height="11.6" fill="#3d3d3d"/><rect x="889" y="697" width="143" height="11.6" fill="#3d3d3d"/><rect x="889" y="743" width="143" height="11.6" fill="#3d3d3d"/>
<rect x="889" y="720" width="141" height="11.6" fill="#505050"/>
<path d="M896 632V770M906 638V766M916 673V696M916 708V726M927 755V771M906 644h10M906 656h10M916 679h9M916 691h9M916 714h9M916 726h9M906 667.5h4M906 702.5h4" stroke="#4e4e4e" fill="none" stroke-width=".7"/>
<use href="#ta" x="895" y="563.5"/><path d="M902.5 558.5l1.4 3 3.4.3-2.5 2.2.7 3.2-3-1.7-3 1.7.7-3.2-2.5-2.2 3.4-.3z" fill="#c8c8c8"/><text x="914.5" y="566.8" class="w" style="font-weight:bold;font-size:9.3px">Favorites</text>
<use href="#mag" x="916.5" y="575"/><text x="924" y="578.7">All Materials</text>
<use href="#mag" x="916.5" y="586.5"/><text x="924" y="590.3">All Models</text>
<use href="#mag" x="916.5" y="598"/><text x="924" y="602">All Prefabs</text>
<use href="#ta" x="895" y="621.5"/><use href="#fc" x="902" y="616"/><text x="914.5" y="625" class="w" style="font-weight:bold;font-size:9.3px">Assets</text>
<use href="#ta" x="905" y="633"/><use href="#fo" x="912" y="627.5"/><text x="924" y="636.4">_walkingParticleSystem</text>
<use href="#fc" x="922" y="639.5"/><rect x="927" y="643" width="6" height="5.5" fill="#eee"/><text x="933" y="648">_docs</text>
<use href="#fc" x="922" y="651"/><circle cx="930" cy="657" r="3" fill="#58b7ea"/><text x="933" y="659.7">_Material</text>
<use href="#ta" x="915" y="668"/><use href="#fo" x="921.5" y="662.5"/><text x="933" y="671.3">_prefab</text>
<use href="#fcube" x="932" y="674"/><text x="945" y="683">_mainPrefab</text>
<use href="#fcube" x="932" y="686"/><text x="945" y="694.7">_subPrefab</text>
<use href="#ta" x="915" y="703"/><use href="#fo" x="921.5" y="697.5"/><text x="933" y="706.3">_texture</text>
<use href="#fc" x="932.5" y="709.5"/><rect x="936" y="712.5" width="7.5" height="7" fill="#eee"/><text x="948" y="718">_menuIcon</text>
<use href="#fc" x="932.5" y="721"/><rect x="936" y="724" width="7.5" height="6.5" fill="#111"/><path d="M937 726v3M938 727.5h1.5M940 726h3v3h-3" stroke="#d63a3a" stroke-width=".8" fill="none"/><text x="948" y="729.6">_systemParticle</text>
<use href="#ta" x="905" y="738"/><use href="#fo" x="912" y="732.5"/><text x="924" y="741.3">Assets</text>
<use href="#ta" x="915" y="749.5"/><use href="#fo" x="922" y="744"/><text x="934" y="753">Avatar</text>
<use href="#ra" x="925" y="761"/><use href="#fcube" x="932.5" y="756"/><text x="945" y="764.7">ELusion</text>
<use href="#fcube" x="932.5" y="767"/><text x="945" y="775.5">Kinako</text>
<rect x="889" y="771" width="342" height="16" fill="#191919"/>
<rect x="1032" y="557.5" width="8.5" height="213.5" fill="#373737"/><rect x="1032.5" y="569" width="7" height="137" rx="3" fill="#5f5f5f"/><path d="M1033.5 565h5l-2.5-3z" fill="#aaa"/><path d="M1033.5 763.5h5l-2.5 3z" fill="#aaa"/>
<!-- grid -->
<rect x="1041" y="557.5" width="188" height="213.5" fill="#383838"/>
<rect x="1041" y="557.5" width="188" height="15" fill="#3c3c3c"/>
<text x="1043.5" y="568.5">Assets</text><path d="M1075 562.5l2.500 2.500-2.500 2.500M1187 562.5l2.500 2.500-2.500 2.500" stroke="#8e8e8e" fill="none" stroke-width=".9"/><text x="1083.5" y="568.5">_walkingParticleSystem</text><text x="1194" y="568.5" textLength="32">_texture</text>
<rect x="1070" y="581" width="12" height="44" fill="#000"/>
<ellipse cx="1076" cy="589" rx="3.8" ry="5.2" fill="none" stroke="#e6e6e6" stroke-width=".8"/><ellipse cx="1076" cy="603.5" rx="4.2" ry="5.6" fill="none" stroke="#e6e6e6" stroke-width=".8"/><ellipse cx="1076" cy="618" rx="3.7" ry="5" fill="#dfe8ff"/>
<rect x="1113" y="581" width="44" height="44" fill="#000"/>
<path d="M1135 583q5 .5 7 2.5 3 0 5 2.5 3 2 3.500 5 2 3 1.500 6 1.500 3-.5 6-.5 3-3 5-1.500 3-5 4-2.500 2.500-6 2.500-3 1-6.500-.5-4 0-6-2.500-3.500-1-4.500-4.500-3-3-2.500-6-1.500-3 0-6.500-.5-3.500 2-5.500 1-3.500 4.500-4 1.500-3 5-3z" fill="#fff"/>
<rect x="1171" y="581" width="44" height="44" fill="#000"/>
<path d="M1177 596v12" stroke="#e73c42" stroke-width="5" stroke-linecap="round"/><path d="M1178 602h10" stroke="#e73c42" stroke-width="6"/><path d="M1192 597h14v11h-14" fill="none" stroke="#e73c42" stroke-width="6" stroke-linejoin="round"/>
<rect x="1048.500" y="627" width="55" height="11.500" rx="2" fill="#4f4f4f"/>
<text x="1052.500" y="636" style="font-size:8.7px">systemPart...</text><text x="1111" y="636" style="font-size:8.7px">systemPart...</text><text x="1169" y="636" style="font-size:8.7px">systemPart...</text>
<text x="1052.500" y="704" style="font-size:8.7px">systemPart...</text><text x="1111" y="704" style="font-size:8.7px">systemPart...</text><text x="1169" y="704" style="font-size:8.7px">systemPart...</text>
<rect x="1070" y="649" width="12" height="44" fill="#000"/>
<path d="M1073 654h6M1076 651v6M1073 662q3-3 6 0-3 3-6 0M1076 659v6M1073 670h6M1074 668l4 4M1078 668l-4 4M1072 679q4-3 8 0zM1073 688h6M1076 685v6" stroke="#ddd" stroke-width=".9" fill="none"/>
<rect x="1131" y="649" width="7.500" height="44" fill="#000"/>
<g fill="#eee"><circle cx="1134.700" cy="654" r="1.200"/><circle cx="1134.700" cy="661" r="1.200"/><circle cx="1134.700" cy="668" r="1"/><circle cx="1134.700" cy="675" r="1"/><circle cx="1134.700" cy="682" r="1.400"/><circle cx="1134.700" cy="689" r="1"/></g>
<rect x="1191" y="649" width="4.500" height="44" fill="#303030"/><path d="M1193 651v40" stroke="#555" stroke-dasharray="1.500 3"/>
<rect x="1041" y="756" width="188" height="15" fill="#3c3c3c"/>
<rect x="1046.500" y="758" width="3" height="11" fill="#000"/><circle cx="1048" cy="760.500" r="1" fill="none" stroke="#ddd" stroke-width=".6"/><rect x="1047" y="765" width="2" height="3" fill="#fff"/>
<text x="1055" y="767.500">Assets/_walkingParticleSyste</text>
<rect x="1178" y="763" width="40" height="1" fill="#707070"/><circle cx="1201" cy="763.500" r="3.600" fill="#b0b0b0"/>

<!-- MA INFO -->
<rect x="1229" y="529" width="2" height="242" fill="#222"/>
<rect x="1231" y="529" width="169" height="242" fill="#383838"/>
<rect x="1231" y="529" width="169" height="13" fill="#282828"/><rect x="1231" y="529" width="77" height="13" fill="#383838"/>
<text x="1236" y="539.500">MA Information</text>
<circle cx="1390" cy="533" r=".9" fill="#ccc"/><circle cx="1390" cy="535.500" r=".9" fill="#ccc"/><circle cx="1390" cy="538" r=".9" fill="#ccc"/>
<path d="M1252 570V556L1258 553 1266 562 1274 553 1280 556V570L1266 564z" fill="none" stroke="#2f9ae0" stroke-width="2"/>
<path d="M1258 558 1262 566 1266 568 1270 566 1274 558" fill="none" stroke="#2f9ae0" stroke-width="1.300"/>
<text x="1283" y="560.500" textLength="70" lengthAdjust="spacingAndGlyphs" style="font-size:12.500px;font-weight:bold;fill:#ececec;letter-spacing:0">odular</text>
<text x="1283" y="572.500" textLength="69" lengthAdjust="spacingAndGlyphs" style="font-size:12.500px;font-weight:bold;fill:#ececec;letter-spacing:0">Avatar</text>
<path d="M1358 558l11-5 11 5v11l-11 6-11-6zM1358 558l11 6 11-6M1369 564v11" fill="none" stroke="#2f9ae0" stroke-width="1.800" stroke-linejoin="round"/>
<path d="M1359 552l5-7 5 5 5-6 5 4-2 6-8 1z" fill="none" stroke="#2f9ae0" stroke-width="1.500"/>
<rect x="1231" y="578" width="169" height="1" fill="#1f1f1f"/>
<use href="#ta" x="1240" y="588.500"/><text x="1247.500" y="592.500">Expressions Parameter Usage</text>
<text x="1280" y="624" style="font-size:15px;letter-spacing:.05px;fill:#c6c6c6">[ NO DATA ]</text>
<rect x="1231" y="644" width="169" height="1" fill="#1f1f1f"/>
<text x="1244.500" y="667">Editor Language</text>
<rect x="1356" y="657" width="30" height="12.500" rx="1" fill="#555"/><text x="1357.500" y="666.500" class="d">Engl</text><use href="#da" x="1380" y="663"/>

<!-- status bar icons -->
<g fill="none" stroke="#bdbdbd" stroke-width="1">
<path d="M1329 775l8 8M1337 775l-8 8"/><circle cx="1333" cy="779" r="3" fill="#bdbdbd"/>
<path d="M1348 775h8l-1 3h-6zM1347 780h10M1348 783h8"/><path d="M1368 775h6v8h-6zM1366 783l10-8"/>
<circle cx="1390" cy="779" r="4.500"/><path d="M1388 779l1.500 1.500 2.500-3"/>
</g>

<!-- RED ANNOTATIONS -->
<rect x="177.500" y="241.500" width="22.500" height="22" rx="2" fill="none" stroke="#d9543a" stroke-width="1.200"/>
<rect x="481" y="652" width="187" height="25" rx="2.500" fill="none" stroke="#d9543a" stroke-width="1.300"/>
<path d="M202 270 483 648" stroke="#d9543a" stroke-width="2" fill="none"/>
<path d="M197 263l11.500 5.500-8 5.500z" fill="#d9543a"/>
</svg>
</body></html>
